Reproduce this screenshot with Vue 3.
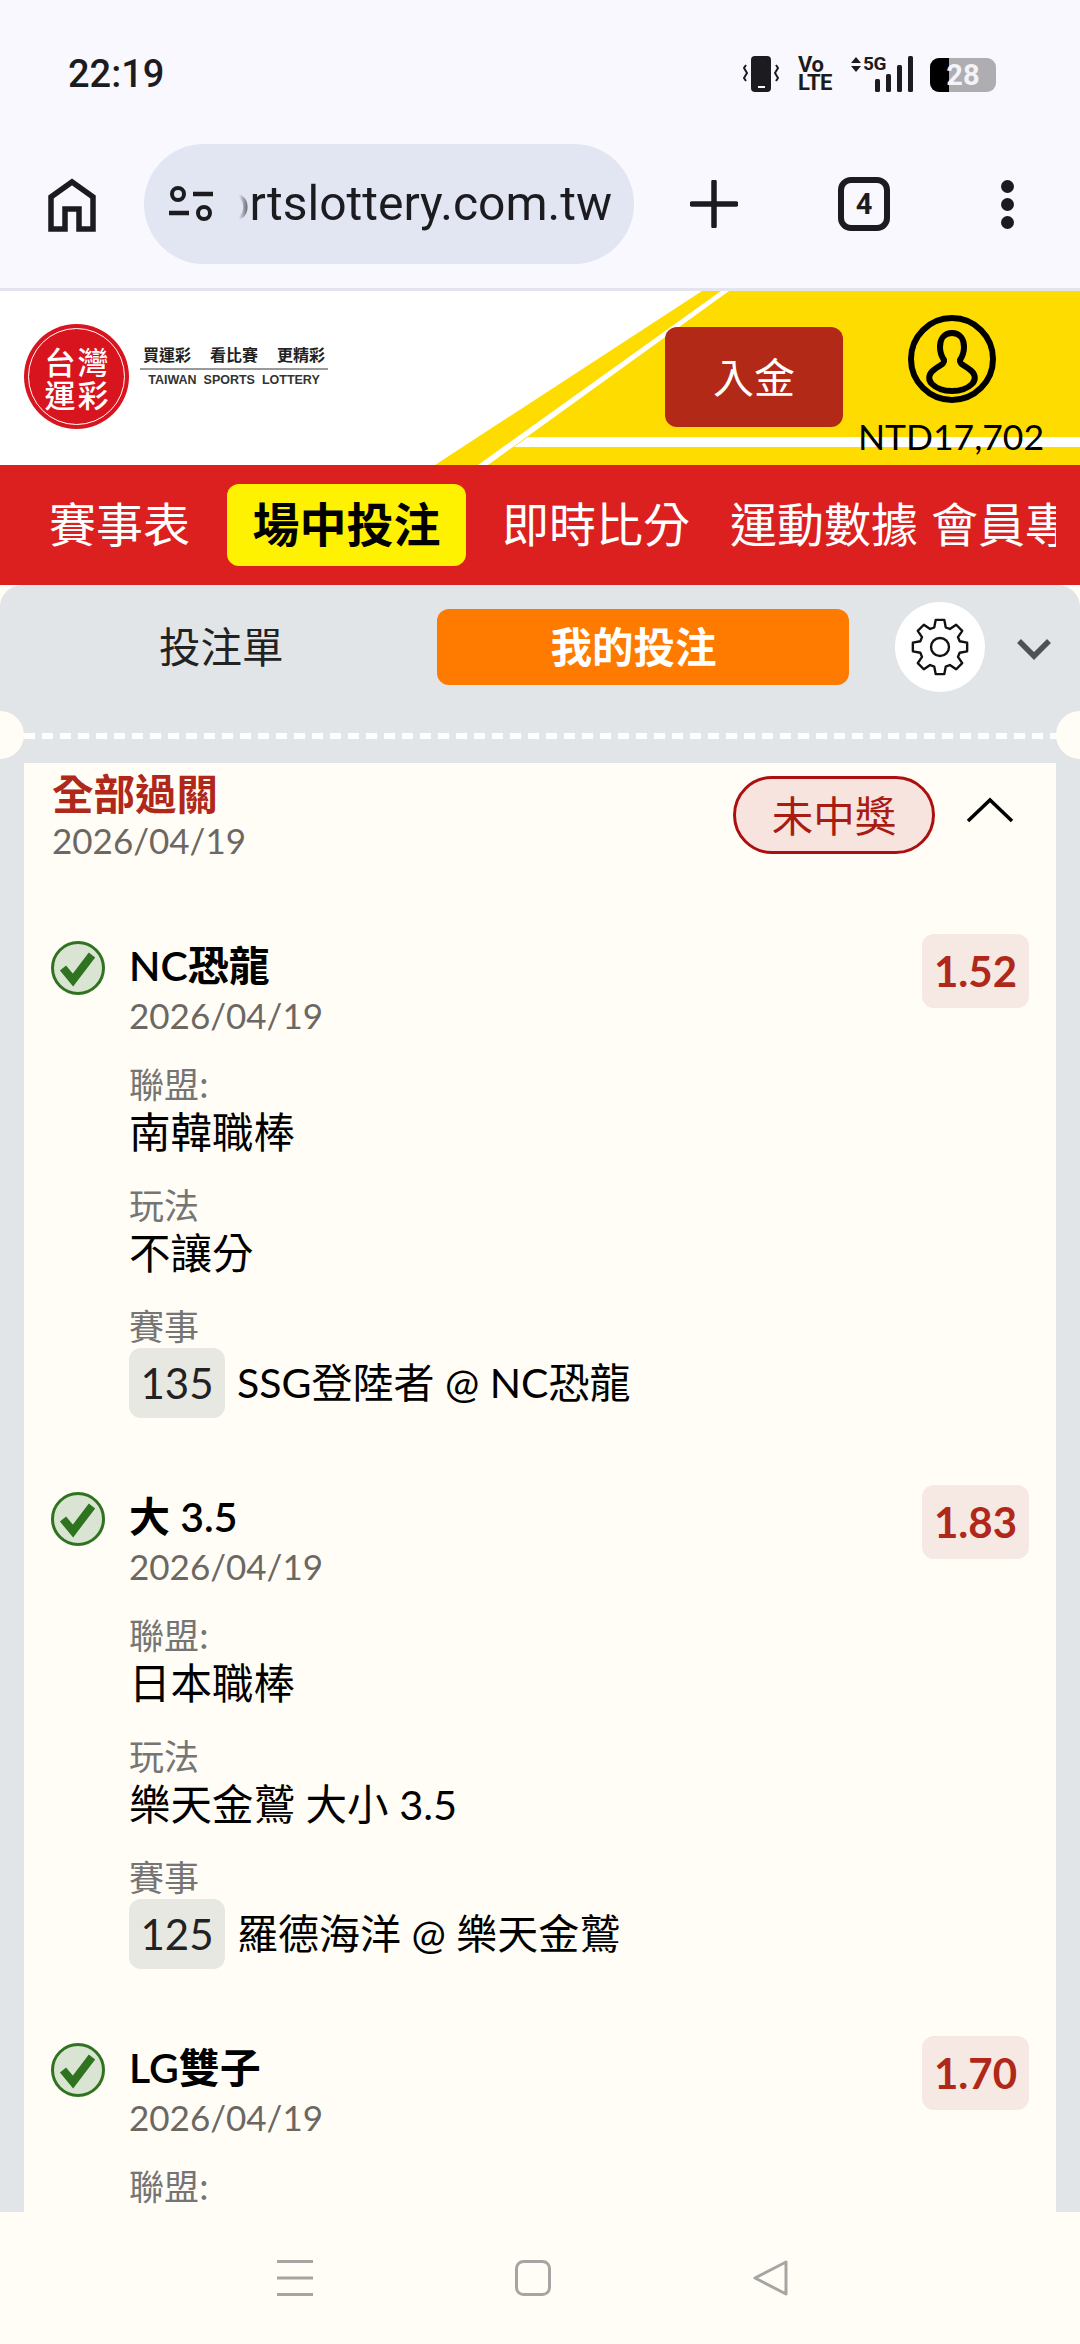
<template>
  <div class="phone">
    <!-- status bar -->
    <div class="status">
      <span class="time">22:19</span>
      <div class="status-icons">
        <svg class="ic-vib" width="38" height="36" viewBox="0 0 38 36">
          <rect x="8" y="0" width="20" height="36" rx="4" fill="#1c1b20" />
          <rect x="15" y="30" width="7" height="2" fill="#f8f8fe" />
          <path d="M3 9l-2 3 3 5-3 5 2 3M33 9l2 3-3 5 3 5-2 3" fill="none" stroke="#1c1b20" stroke-width="2" />
        </svg>
        <div class="volte"><span>Vo</span><span>LTE</span></div>
        <div class="signal">
          <svg class="arrows" width="10" height="15" viewBox="0 0 10 15">
            <path d="M5 0l5 6H0zM5 15L0 9h10z" fill="#1c1b20" />
          </svg>
          <span class="five-g">5G</span>
          <svg class="bars" width="38" height="36" viewBox="0 0 38 36">
            <rect x="0" y="23" width="5" height="13" rx="1.5" />
            <rect x="11" y="18" width="5" height="18" rx="1.5" />
            <rect x="22" y="9" width="5" height="27" rx="1.5" />
            <rect x="33" y="0" width="5" height="36" rx="1.5" />
          </svg>
        </div>
        <div class="battery">
          <div class="battery-fill"></div>
          <span>28</span>
        </div>
      </div>
    </div>

    <!-- browser toolbar -->
    <div class="toolbar">
      <svg class="tool-home" width="48" height="54" viewBox="0 0 48 54">
        <path d="M3 51V19L24 4l21 15v32H31V31H17v20z" fill="none" stroke="#1c1b20" stroke-width="5.5" />
      </svg>
      <div class="url-pill">
        <svg width="44" height="38" viewBox="0 0 44 38">
          <circle cx="9" cy="9" r="6" fill="none" stroke="#1c1b20" stroke-width="4" />
          <path d="M24 9h20M0 28h20" stroke="#1c1b20" stroke-width="4.5" />
          <circle cx="35" cy="28" r="6" fill="none" stroke="#1c1b20" stroke-width="4" />
        </svg>
        <div class="url-text">sportslottery.com.tw</div>
      </div>
      <svg class="tool-plus" width="48" height="48" viewBox="0 0 48 48">
        <path d="M24 2v44M2 24h44" stroke="#1c1b20" stroke-width="5.5" stroke-linecap="round" />
      </svg>
      <div class="tab-count">4</div>
      <div class="dots"><i></i><i></i><i></i></div>
    </div>

    <!-- site header -->
    <header class="site-head">
      <svg class="head-bg" width="1080" height="174" viewBox="0 0 1080 174">
        <path d="M702 0H1080V174H435z" fill="#ffdc00" />
        <path d="M721 0H729L488 174H478z" fill="#fff" />
        <path d="M528 146H1080V156H514z" fill="#fff" />
      </svg>
      <div class="logo">
        <div class="logo-badge">
          <div class="logo-ring">
            <span>台</span><span>灣</span><span>運</span><span>彩</span>
          </div>
        </div>
        <div class="logo-copy">
          <div class="logo-slogan"><span>買運彩</span><span>看比賽</span><span>更精彩</span></div>
          <div class="logo-en">TAIWAN&nbsp; SPORTS&nbsp; LOTTERY</div>
        </div>
      </div>
      <div class="head-right">
        <button class="deposit">入金</button>
        <div class="account">
          <svg width="88" height="88" viewBox="0 0 88 88">
            <ellipse cx="44" cy="44" rx="41" ry="41" fill="none" stroke="#000" stroke-width="6" />
            <path
              d="M44 18C36 18 32 24 32 32C32 38 34 42 36 45C37 49 32 50 27 54C21 58 19 64 24 69C30 75 38 76 44 76C50 76 58 75 64 69C69 64 67 58 61 54C56 50 51 49 52 45C54 42 56 38 56 32C56 24 52 18 44 18Z"
              fill="none"
              stroke="#000"
              stroke-width="6"
            />
          </svg>
          <span class="balance">NTD17,702</span>
        </div>
      </div>
    </header>

    <!-- main nav -->
    <nav class="main-nav">
      <div class="nav-track">
        <a
          v-for="item in navItems"
          :key="item.label"
          class="nav-item"
          :class="{ active: item.active }"
        >{{ item.label }}</a>
      </div>
    </nav>

    <!-- bet slip -->
    <main class="content">
      <section class="slip">
        <div class="slip-tabs">
          <div class="tab">投注單</div>
          <div class="tab tab-on">我的投注</div>
          <div class="gear-btn">
            <svg width="62" height="60" viewBox="0 0 24 24">
              <path :d="gearPath" fill="none" stroke="#111" stroke-width="0.95" stroke-linejoin="round" />
              <circle cx="12" cy="12" r="3.6" fill="none" stroke="#111" stroke-width="0.95" />
            </svg>
          </div>
          <svg class="slip-toggle" width="36" height="22" viewBox="0 0 36 22">
            <path d="M3 3l15 15L33 3" fill="none" stroke="#4d5257" stroke-width="5.5" />
          </svg>
        </div>
        <div class="perforation"></div>

        <div class="card">
          <div class="card-head">
            <div class="card-title">
              <div class="parlay">全部過關</div>
              <div class="date">2026/04/19</div>
            </div>
            <span class="result-pill">未中獎</span>
            <svg class="collapse" width="48" height="26" viewBox="0 0 48 26">
              <path d="M2 24L24 3l22 21" fill="none" stroke="#000" stroke-width="3.5" />
            </svg>
          </div>

          <div v-for="bet in bets" :key="bet.name" class="bet">
            <svg class="check" width="54" height="54" viewBox="0 0 54 54">
              <circle cx="27" cy="27" r="25.5" fill="#d9e5d2" stroke="#2f7321" stroke-width="3" />
              <path d="M12 27l10 12 19-25" fill="none" stroke="#2f7321" stroke-width="8" />
            </svg>
            <div class="bet-body">
              <div class="bet-name">{{ bet.name }}</div>
              <div class="date">2026/04/19</div>
              <div class="field-label first">聯盟:</div>
              <template v-if="bet.league">
                <div class="field-value">{{ bet.league }}</div>
                <div class="field-label">玩法</div>
                <div class="field-value">{{ bet.play }}</div>
                <div class="field-label">賽事</div>
                <div class="match">
                  <span class="match-no">{{ bet.no }}</span>
                  <span class="match-name">{{ bet.match }}</span>
                </div>
              </template>
            </div>
            <div class="odds">{{ bet.odds }}</div>
          </div>
        </div>
      </section>
    </main>

    <!-- android nav -->
    <div class="sys-nav">
      <svg width="36" height="36" viewBox="0 0 36 36">
        <path d="M0 1.5h36M0 18h36M0 34.500h36" stroke="#a5a5a3" stroke-width="3" />
      </svg>
      <svg width="36" height="36" viewBox="0 0 36 36">
        <rect x="1.500" y="1.500" width="33" height="33" rx="7" fill="none" stroke="#a5a5a3" stroke-width="3" />
      </svg>
      <svg width="36" height="36" viewBox="0 0 36 36">
        <path d="M33 2v32L2 18z" fill="none" stroke="#a5a5a3" stroke-width="3" stroke-linejoin="round" />
      </svg>
    </div>
  </div>
</template>

<script setup>
const navItems = [
  { label: '賽事表' },
  { label: '場中投注', active: true },
  { label: '即時比分' },
  { label: '運動數據' },
  { label: '會員專區' }
]

const bets = [
  {
    name: 'NC恐龍',
    odds: '1.52',
    league: '南韓職棒',
    play: '不讓分',
    no: '135',
    match: 'SSG登陸者 @ NC恐龍'
  },
  {
    name: '大 3.5',
    odds: '1.83',
    league: '日本職棒',
    play: '樂天金鷲 大小 3.5',
    no: '125',
    match: '羅德海洋 @ 樂天金鷲'
  },
  { name: 'LG雙子', odds: '1.70' }
]

// 8 tooth gear outline
const gearPath = (() => {
  const pts = []
  for (let i = 0; i < 8; i++) {
    const a = (i * Math.PI) / 4 - Math.PI / 2
    const step = Math.PI / 4
    const corners = [
      [8.2, a - step * 0.36],
      [11, a - step * 0.2],
      [11, a + step * 0.2],
      [8.2, a + step * 0.36]
    ]
    corners.forEach(([r, t]) => {
      pts.push(`${(12 + r * Math.cos(t)).toFixed(2)} ${(12 + r * Math.sin(t)).toFixed(2)}`)
    })
  }
  return 'M' + pts.join('L') + 'Z'
})()
</script>

<style>
html,
body {
  margin: 0;
  background: #fffdf5;
}
</style>

<style scoped>
.phone {
  width: 1080px;
  height: 2344px;
  display: flex;
  flex-direction: column;
  overflow: hidden;
  background: #fffdf5;
  font-family: Lato, "Noto Sans CJK TC", sans-serif;
  color: #000;
}

.status {
  height: 144px;
  flex: none;
  box-sizing: border-box;
  padding: 56px 84px 0 68px;
  display: flex;
  justify-content: space-between;
  align-items: flex-start;
  background: #f8f8fe;
  color: #1c1b20;
}

.time {
  font-family: Roboto, sans-serif;
  font-size: 38px;
  font-weight: 500;
  line-height: 36px;
}

.status-icons {
  display: flex;
  align-items: flex-start;
}

.volte {
  width: 33px;
  margin-left: 17px;
  display: flex;
  flex-direction: column;
  font-family: Roboto, sans-serif;
  font-size: 22px;
  font-weight: 700;
  line-height: 18px;
  letter-spacing: -0.5px;
}

.signal {
  width: 62px;
  height: 36px;
  margin-left: 20px;
  position: relative;
}

.arrows {
  position: absolute;
  left: 0;
  top: 1px;
}

.five-g {
  position: absolute;
  left: 12px;
  top: 0;
  font-family: Roboto, sans-serif;
  font-size: 19px;
  font-weight: 700;
  line-height: 16px;
  letter-spacing: -0.5px;
}

.bars {
  position: absolute;
  right: 0;
  top: 0;
  fill: #1c1b20;
}

.battery {
  width: 66px;
  height: 34px;
  margin-left: 17px;
  margin-top: 2px;
  position: relative;
  display: flex;
  align-items: center;
  justify-content: center;
  background: #aeaeb2;
  border-radius: 9px;
  overflow: hidden;
}

.battery-fill {
  position: absolute;
  left: 0;
  top: 0;
  bottom: 0;
  width: 19px;
  background: #000;
}

.battery span {
  position: relative;
  font-family: Roboto, sans-serif;
  font-size: 29px;
  font-weight: 700;
  color: #f4f4f6;
}

.toolbar {
  height: 147px;
  flex: none;
  box-sizing: border-box;
  padding-left: 48px;
  display: flex;
  align-items: flex-start;
  background: #f8f8fe;
  border-bottom: 3px solid #e3e4ee;
}

.tool-home {
  margin-top: 34px;
}

.url-pill {
  width: 490px;
  height: 120px;
  margin-left: 48px;
  box-sizing: border-box;
  padding: 0 22px 0 25px;
  display: flex;
  align-items: center;
  gap: 22px;
  background: #e2e5f2;
  border-radius: 60px;
}

.url-pill svg {
  flex: none;
}

.url-text {
  flex: 1;
  min-width: 0;
  overflow: hidden;
  display: flex;
  justify-content: flex-end;
  white-space: nowrap;
  font-family: Roboto, sans-serif;
  font-size: 48px;
  line-height: 62px;
  color: #1c1b20;
  -webkit-mask-image: linear-gradient(to right, transparent 0, transparent 4px, #000 18px);
  mask-image: linear-gradient(to right, transparent 0, transparent 4px, #000 18px);
}

.tool-plus {
  margin-top: 36px;
  margin-left: 56px;
}

.tab-count {
  width: 52px;
  height: 54px;
  margin-top: 33px;
  margin-left: 100px;
  box-sizing: border-box;
  border: 6px solid #1c1b20;
  border-radius: 13px;
  display: flex;
  align-items: center;
  justify-content: center;
  font-family: Roboto, sans-serif;
  font-size: 29px;
  font-weight: 700;
  color: #1c1b20;
}

.dots {
  margin-top: 36px;
  margin-left: 111px;
  display: flex;
  flex-direction: column;
  gap: 5px;
}

.dots i {
  width: 13px;
  height: 13px;
  border-radius: 50%;
  background: #1c1b20;
}

.site-head {
  height: 174px;
  flex: none;
  position: relative;
  display: flex;
  justify-content: space-between;
  background: #fff;
  overflow: hidden;
}

.head-bg {
  position: absolute;
  left: 0;
  top: 0;
}

.logo {
  position: relative;
  display: flex;
  padding: 33px 0 0 24px;
}

.logo-badge {
  width: 105px;
  height: 105px;
  box-sizing: border-box;
  padding: 4px;
  border-radius: 50%;
  background: #d8141f;
}

.logo-ring {
  width: 97px;
  height: 97px;
  box-sizing: border-box;
  border: 1.5px solid #fff;
  border-radius: 50%;
  display: grid;
  grid-template-columns: 33px 33px;
  grid-auto-rows: 33px;
  justify-content: center;
  align-content: center;
  font-family: "Noto Sans CJK TC", sans-serif;
  font-size: 31px;
  font-weight: 500;
  line-height: 33px;
  text-align: center;
  color: #fff;
}

.logo-copy {
  width: 188px;
  margin-left: 11px;
  padding-top: 19px;
}

.logo-slogan {
  display: flex;
  justify-content: space-between;
  padding: 0 3px;
  box-sizing: border-box;
  height: 27px;
  font-size: 16px;
  font-weight: 700;
  line-height: 24px;
  color: #222;
  border-bottom: 2px solid #999;
}

.logo-en {
  margin-top: 2px;
  font-family: "Liberation Sans", sans-serif;
  font-size: 12.5px;
  font-weight: 700;
  line-height: 16px;
  text-align: center;
  color: #333;
  white-space: nowrap;
}

.head-right {
  position: relative;
  display: flex;
  align-items: flex-start;
  padding-right: 36px;
}

.deposit {
  width: 178px;
  height: 100px;
  margin-top: 36px;
  padding: 0 0 5px;
  border: none;
  border-radius: 12px;
  background: #b32917;
  font-family: "Noto Sans CJK TC", sans-serif;
  font-size: 41px;
  color: #fff;
}

.account {
  width: 186px;
  margin-left: 15px;
  padding-top: 24px;
  display: flex;
  flex-direction: column;
  align-items: center;
}

.account svg {
  margin-left: 2px;
}

.balance {
  margin-top: 12px;
  font-size: 35.5px;
  line-height: 44px;
  white-space: nowrap;
}

.main-nav {
  height: 120px;
  flex: none;
  box-sizing: border-box;
  padding-right: 24px;
  display: flex;
  align-items: center;
  background: #dc2020;
}

.nav-track {
  flex: 1;
  min-width: 0;
  display: flex;
  align-items: center;
  overflow: hidden;
}

.nav-item {
  flex: none;
  margin-left: 40px;
  font-family: "Noto Sans CJK TC", sans-serif;
  font-size: 47px;
  line-height: 76px;
  padding-bottom: 6px;
  color: #fff;
  white-space: nowrap;
}

.nav-item:nth-child(1) {
  margin-left: 49px;
}

.nav-item:nth-child(2) {
  margin-left: 37px;
}

.nav-item:nth-child(3) {
  margin-left: 36px;
}

.nav-item:last-child {
  margin-left: 13px;
}

.nav-item.active {
  width: 239px;
  text-align: center;
  background: #fff200;
  border-radius: 12px;
  font-weight: 700;
  color: #000;
}

.content {
  flex: 1;
  min-height: 0;
  overflow: hidden;
}

.slip {
  position: relative;
  padding: 0 24px;
  background: #e2e5e8;
  border-radius: 22px 22px 0 0;
}

.slip-tabs {
  height: 148px;
  display: flex;
  align-items: flex-start;
}

.tab {
  font-family: "Noto Sans CJK TC", sans-serif;
  font-size: 41.5px;
  line-height: 72px;
  margin-top: 24px;
  color: #222;
}

.tab:first-child {
  margin-left: 135px;
}

.tab-on {
  width: 412px;
  height: 76px;
  margin-left: 153px;
  box-sizing: border-box;
  padding-right: 18px;
  text-align: center;
  background: #ff7b00;
  border-radius: 12px;
  font-weight: 700;
  color: #fff;
}

.gear-btn {
  width: 90px;
  height: 90px;
  margin-top: 17px;
  margin-left: 46px;
  border-radius: 50%;
  background: #fff;
  display: flex;
  align-items: center;
  justify-content: center;
}

.slip-toggle {
  margin-top: 53px;
  margin-left: 31px;
}

.perforation {
  height: 6px;
  margin: 0 -24px;
  position: relative;
  background-image: linear-gradient(to right, #fff 11px, transparent 11px);
  background-size: 18px 6px;
  background-position: 6px 0;
}

.perforation::before,
.perforation::after {
  content: "";
  position: absolute;
  top: -22px;
  width: 48px;
  height: 48px;
  border-radius: 50%;
  background: #fffdf5;
}

.perforation::before {
  left: -24px;
}

.perforation::after {
  right: -24px;
}

.card {
  margin-top: 24px;
  padding: 8px 27px 0 28px;
  background: #fffdf5;
}

.card-head {
  height: 163px;
  display: flex;
  align-items: flex-start;
}

.card-title {
  flex: 1;
}

.parlay {
  font-family: "Noto Sans CJK TC", sans-serif;
  font-size: 41.5px;
  font-weight: 700;
  line-height: 42px;
  color: #b0281a;
}

.date {
  font-size: 35px;
  line-height: 40px;
  color: #6b6864;
}

.card-title .date {
  margin-top: 7px;
}

.result-pill {
  width: 202px;
  height: 78px;
  margin-top: 5px;
  margin-right: -1px;
  box-sizing: border-box;
  border: 3px solid #ac0f0f;
  border-radius: 39px;
  background: #f8e4df;
  font-family: "Noto Sans CJK TC", sans-serif;
  font-size: 41.5px;
  line-height: 70px;
  text-align: center;
  color: #a81c12;
}

.collapse {
  margin-top: 26px;
  margin-left: 32px;
  margin-right: 15px;
}

.bet {
  height: 551px;
  display: flex;
  align-items: flex-start;
}

.check {
  flex: none;
  margin-top: 7px;
  margin-left: -1px;
}

.bet-body {
  flex: 1;
  margin-left: 24px;
  min-width: 0;
}

.bet-name {
  margin-top: 8px;
  font-size: 41px;
  font-weight: 600;
  line-height: 48px;
  color: #000;
}

.bet-body .date {
  margin-top: 5px;
}

.field-label {
  margin-top: 28px;
  font-family: "Noto Sans CJK TC", sans-serif;
  font-size: 35px;
  line-height: 40px;
  color: #757575;
}

.field-value {
  margin-top: 5px;
  font-size: 41.5px;
  line-height: 48px;
}

.match {
  margin-top: 3px;
  display: flex;
  align-items: center;
}

.match-no {
  width: 96px;
  height: 70px;
  border-radius: 12px;
  background: #e8e8e2;
  font-size: 42px;
  line-height: 70px;
  text-align: center;
  color: #222;
}

.match-name {
  margin-left: 12px;
  font-size: 41px;
  line-height: 48px;
}

.odds {
  flex: none;
  width: 107px;
  height: 74px;
  border-radius: 12px;
  background: #f6e8e2;
  font-size: 42px;
  font-weight: 700;
  line-height: 74px;
  text-align: center;
  color: #b0281a;
}

.sys-nav {
  height: 132px;
  flex: none;
  box-sizing: border-box;
  padding: 48px 291px 0 277px;
  display: flex;
  justify-content: space-between;
  align-items: flex-start;
  background: #fffdf5;
}
</style>
